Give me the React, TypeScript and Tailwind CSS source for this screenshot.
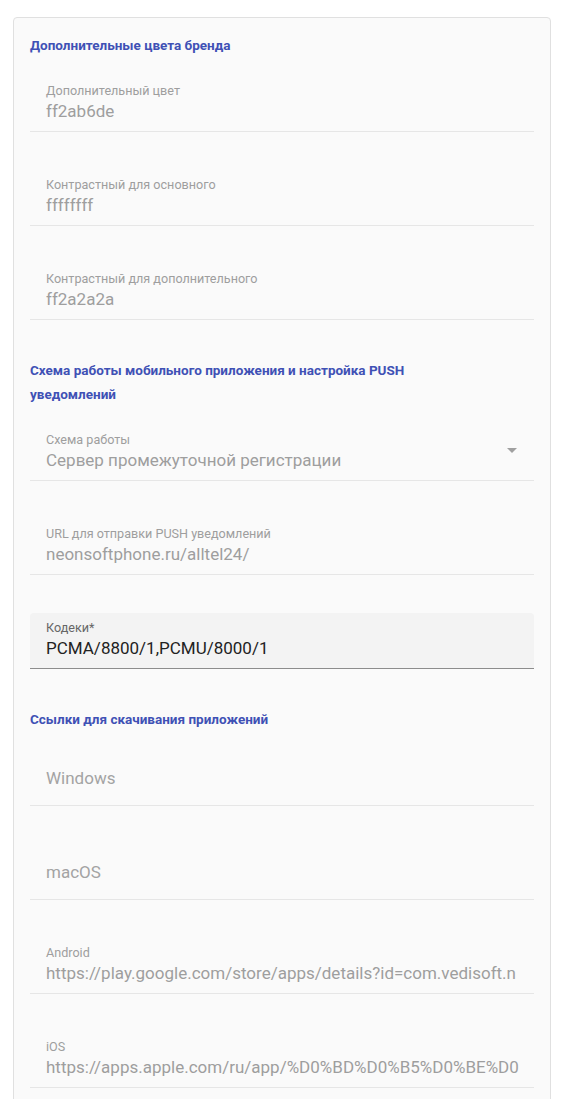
import React from 'react'

const font = { fontFamily: 'Roboto, "Noto Sans", sans-serif' }

function SectionTitle({ children }: { children: React.ReactNode }) {
  return (
    <h3 className="text-[13.5px] font-bold leading-6 text-[#3f51b5] mb-[19px]">{children}</h3>
  )
}

function Field({ label, value, select }: { label: string; value?: string; select?: boolean }) {
  const empty = !value
  return (
    <div className="relative h-[56px] mb-[38px] border-b border-[#e6e6e6]">
      {empty ? (
        <div className="pl-4 pt-[16px] text-[17px] leading-[24px] text-[#a3a3a3]">{label}</div>
      ) : (
        <div className="pl-4 pt-[6px]">
          <div className="text-[12.6px] leading-[17px] text-[#9e9e9e]">{label}</div>
          <div className="text-[17px] leading-[25px] text-[#9e9e9e] whitespace-nowrap">{value}</div>
        </div>
      )}
      {select && (
        <svg className="absolute right-[10px] top-[13px]" width="24" height="24" viewBox="0 0 24 24">
          <path d="M7 10l5 5 5-5z" fill="#a0a0a0" />
        </svg>
      )}
    </div>
  )
}

function ActiveField({ label, value }: { label: string; value: string }) {
  return (
    <div className="h-[56px] mb-[38px] bg-[#f3f3f3] rounded-t border-b border-[#8c8c8c] pl-4 pt-[6px]">
      <div className="text-[12.6px] leading-[17px] text-[#666666]">{label}</div>
      <div className="text-[17px] leading-[25px] text-[#222222]">{value}</div>
    </div>
  )
}

export default function App() {
  return (
    <div className="min-h-screen bg-white pt-[17px] pl-[13px]" style={font}>
      <div className="w-[538px] min-h-[1100px] bg-[#fafafa] border border-[#e0e0e0] rounded px-4 pt-[15px]">
        <SectionTitle>Дополнительные цвета бренда</SectionTitle>
        <Field label="Дополнительный цвет" value="ff2ab6de" />
        <Field label="Контрастный для основного" value="ffffffff" />
        <Field label="Контрастный для дополнительного" value="ff2a2a2a" />

        <SectionTitle>
          Схема работы мобильного приложения и настройка PUSH
          <br />
          уведомлений
        </SectionTitle>
        <Field label="Схема работы" value="Сервер промежуточной регистрации" select />
        <Field label="URL для отправки PUSH уведомлений" value="neonsoftphone.ru/alltel24/" />
        <ActiveField label="Кодеки*" value="PCMA/8800/1,PCMU/8000/1" />

        <SectionTitle>Ссылки для скачивания приложений</SectionTitle>
        <Field label="Windows" />
        <Field label="macOS" />
        <Field label="Android" value="https://play.google.com/store/apps/details?id=com.vedisoft.n" />
        <Field label="iOS" value="https://apps.apple.com/ru/app/%D0%BD%D0%B5%D0%BE%D0" />
      </div>
    </div>
  )
}
